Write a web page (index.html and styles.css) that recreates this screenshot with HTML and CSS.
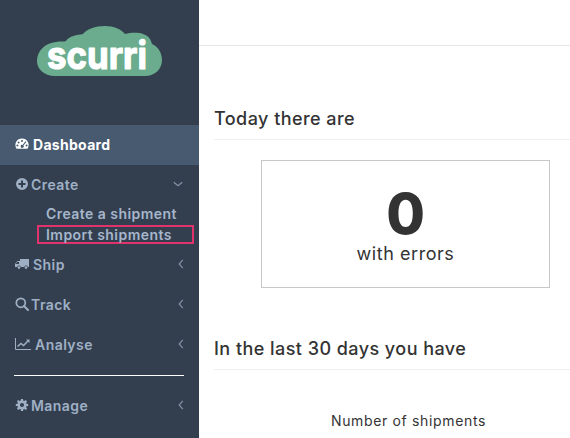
FILE: index.html
```html
<!DOCTYPE html>
<html lang="en">
<head>
  <meta charset="UTF-8" />
  <title>Scurri Dashboard</title>
  <link rel="stylesheet" href="styles.css">
</head>
<body>

  <aside class="sidebar">
    <div class="logo">
      <svg width="126" height="54" viewBox="0 0 126 54">
        <path fill="#6aac8d" d="M18 50C7 50 0 43 0 35C0 25 8 17 19 16C24 15 27 16 29 15C32 10 40 9 46 8C50 3 58 0 68 0C77 0 84 3 88 8C93 7 100 6 106 8C113 10 114 15 115 18C122 21 125 28 125 34C125 43 118 50 108 50Z"/>
        <text class="logo-text" x="10" y="43" textLength="100" lengthAdjust="spacingAndGlyphs">scurri</text>
      </svg>
    </div>

    <nav class="menu">
      <a class="menu-item active">
        <svg class="icon" viewBox="0 0 14 14"><path fill="currentColor" fill-rule="evenodd" d="M7 1.500a6.500 6.500 0 0 0-5.600 9.900c.2.300.5.400.8.400h9.600c.3 0 .6-.1.800-.4A6.500 6.500 0 0 0 7 1.500ZM7 3a1 1 0 1 1 0 2 1 1 0 0 1 0-2ZM3.600 4.400a1 1 0 1 1 0 2 1 1 0 0 1 0-2ZM2.400 7.500a1 1 0 1 1 0 2 1 1 0 0 1 0-2ZM11.600 7.500a1 1 0 1 1 0 2 1 1 0 0 1 0-2ZM10.600 4.300l.8.600-3 3.600a1.500 1.500 0 1 1-.9-.6Z"/></svg>
        <span>Dashboard</span>
      </a>

      <a class="menu-item">
        <svg class="icon" viewBox="0 0 14 14"><path fill="currentColor" fill-rule="evenodd" d="M7 1a6 6 0 1 0 0 12A6 6 0 0 0 7 1ZM6 3.500h2V6h2.500v2H8v2.500H6V8H3.500V6H6Z"/></svg>
        <span class="tight">Create</span>
        <svg class="chevron down" viewBox="0 0 10 10"><path d="M1.500 3.500 5 6.500l3.500-3" /></svg>
      </a>
      <div class="submenu">
        <a class="sub-item">Create a shipment</a>
        <a class="sub-item marked">Import shipments</a>
      </div>

      <a class="menu-item ship">
        <svg class="icon" viewBox="0 0 14 12"><path fill="currentColor" d="M5 1h9v8h-1.200a1.800 1.800 0 0 0-3.500 0H5.700a1.800 1.800 0 0 0-3.500 0H0V6l2.500-3H5ZM2.200 4 1 5.500V6h3V4Z"/><circle fill="currentColor" cx="4" cy="9.600" r="1.300"/><circle fill="currentColor" cx="11" cy="9.600" r="1.300"/></svg>
        <span>Ship</span>
        <svg class="chevron" viewBox="0 0 10 10"><path d="M6.500 1.500 3.500 5l3 3.500" /></svg>
      </a>

      <a class="menu-item">
        <svg class="icon" viewBox="0 0 14 14"><circle cx="5.800" cy="5.800" r="4.500" fill="none" stroke="currentColor" stroke-width="1.700"/><path d="M9 9l4 4" stroke="currentColor" stroke-width="2" stroke-linecap="round"/></svg>
        <span class="tight">Track</span>
        <svg class="chevron" viewBox="0 0 10 10"><path d="M6.500 1.500 3.500 5l3 3.500" /></svg>
      </a>

      <a class="menu-item">
        <svg class="icon wide" viewBox="0 0 16 12"><path fill="none" stroke="currentColor" stroke-width="1" d="M.5 0v11.500H16"/><path fill="none" stroke="currentColor" stroke-width="1.500" d="M2.500 8.500 6 5.500l2.500 2L13 3"/><path fill="currentColor" d="M11 1.500h3.500V5Z"/></svg>
        <span>Analyse</span>
        <svg class="chevron" viewBox="0 0 10 10"><path d="M6.500 1.500 3.500 5l3 3.500" /></svg>
      </a>

      <hr class="divider">

      <a class="menu-item">
        <svg class="icon" viewBox="0 0 14 14"><path fill="currentColor" fill-rule="evenodd" d="M6 1h2l.3 1.700 1 .4L10.700 2l1.400 1.400-1 1.400.4 1 1.700.3v1.900l-1.700.3-.4 1 1 1.400-1.400 1.400-1.400-1-1 .4L8 13H6l-.3-1.700-1-.4-1.400 1-1.400-1.400 1-1.400-.4-1L.8 7.900V6l1.700-.3.4-1-1-1.400L3.300 2l1.400 1 1-.4ZM7 5a2 2 0 1 0 0 4 2 2 0 0 0 0-4Z"/></svg>
        <span class="tight">Manage</span>
        <svg class="chevron" viewBox="0 0 10 10"><path d="M6.500 1.500 3.500 5l3 3.500" /></svg>
      </a>
    </nav>
  </aside>

  <main class="content">
    <div class="topbar"></div>

    <section class="today">
      <h2 class="section-title">Today there are</h2>
      <div class="stat-box">
        <div class="stat-number">0</div>
        <div class="stat-label">with errors</div>
      </div>
    </section>

    <section class="last-days">
      <h2 class="section-title">In the last 30 days you have</h2>
      <div class="chart-title">Number of shipments</div>
    </section>
  </main>

</body>
</html>
```

FILE: styles.css
```css
* { margin: 0; padding: 0; box-sizing: border-box; }

html, body {
  height: 438px;
  overflow: hidden;
}

body {
  font-family: Inter, 'Open Sans', sans-serif;
  background: #fff;
  color: #333;
  display: flex;
}

.sidebar {
  width: 199px;
  height: 438px;
  flex-shrink: 0;
  background: #333f4f;
}

.logo {
  height: 125px;
  padding: 26px 0 0 37px;
}

.logo svg {
  display: block;
}

.logo-text {
  font-family: Inter, sans-serif;
  font-weight: 700;
  font-size: 38px;
  fill: #fff;
  stroke: #fff;
  stroke-width: 1.200;
  stroke-linejoin: round;
}

.menu-item {
  height: 40px;
  display: flex;
  align-items: center;
  padding: 0 15px 2px;
  font-size: 14px;
  font-weight: 600;
  letter-spacing: .45px;
  color: #9fb0c5;
}

.menu-item span {
  margin-left: 4px;
}

.menu-item span.tight {
  margin-left: 2px;
}

.menu-item.active {
  background: #475a70;
  color: #fff;
  font-weight: 700;
  letter-spacing: .3px;
}

.icon {
  width: 14px;
  height: 14px;
  flex-shrink: 0;
}

.icon.wide {
  width: 16px;
  height: 12px;
}

.chevron {
  width: 12px;
  height: 12px;
  margin-left: auto;
  margin-right: -3px;
  fill: none;
  stroke: currentColor;
  stroke-width: 1;
  opacity: .75;
}

.chevron.down {
  margin-right: 0;
}

.submenu {
  margin-top: -1px;
  height: 41px;
}

.sub-item {
  display: block;
  margin-left: 46px;
  font-size: 14px;
  line-height: 20px;
  font-weight: 600;
  letter-spacing: .45px;
  color: #a6b6cb;
}

.sub-item.marked {
  margin-left: 37px;
  margin-right: 5px;
  margin-top: 1px;
  height: 19px;
  line-height: 15px;
  padding-left: 7px;
  border: 2px solid #e0336b;
}

.divider {
  height: 1px;
  border: none;
  background: #fff;
  margin: 10px 15px 10px 14px;
}

.content {
  flex: 1;
  min-width: 0;
}

.topbar {
  height: 46px;
  border-bottom: 1px solid #e7e7e7;
}

.section-title {
  font-size: 18px;
  font-weight: 500;
  line-height: 24px;
  letter-spacing: .45px;
  color: #333;
  margin-left: 15px;
  padding-top: 1px;
  padding-bottom: 8px;
  border-bottom: 1px solid #eee;
}

.today {
  padding-top: 60px;
}

.stat-box {
  width: 289px;
  height: 128px;
  margin: 20px 0 0 62px;
  border: 1px solid #c8c8c8;
  text-align: center;
}

.stat-number {
  font-size: 56px;
  font-weight: 800;
  line-height: 56px;
  margin-top: 25px;
}

.stat-label {
  font-size: 18px;
  line-height: 24px;
  letter-spacing: .55px;
}

.last-days {
  padding-top: 48px;
}

.chart-title {
  font-size: 14px;
  text-align: center;
  margin: 41px 0 0 47px;
  width: 325px;
  line-height: 20px;
  letter-spacing: .65px;
}
```
